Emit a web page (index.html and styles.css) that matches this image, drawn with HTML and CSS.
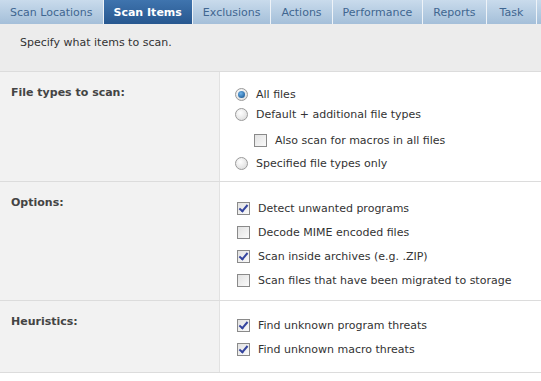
FILE: index.html
```html
<!DOCTYPE html>
<html lang="en">
<head>
    <meta charset="UTF-8">
    <title>Scan Items</title>
    <link rel="stylesheet" href="styles.css">
</head>
<body>
    <!-- Tab strip -->
    <div class="tabs">
        <div class="tab">Scan Locations</div>
        <div class="tab active">Scan Items</div>
        <div class="tab">Exclusions</div>
        <div class="tab">Actions</div>
        <div class="tab">Performance</div>
        <div class="tab">Reports</div>
        <div class="tab wide">Task</div>
        <div class="tab rest"></div>
    </div>

    <div class="intro">Specify what items to scan.</div>

    <div class="section">
        <div class="label">File types to scan:</div>
        <div class="fields">
            <div class="option"><span class="radio on"></span>All files</div>
            <div class="option"><span class="radio"></span>Default + additional file types</div>
            <div class="option sub"><span class="check"></span>Also scan for macros in all files</div>
            <div class="option"><span class="radio"></span>Specified file types only</div>
        </div>
    </div>

    <div class="section">
        <div class="label">Options:</div>
        <div class="fields boxes">
            <div class="option"><span class="check on"></span>Detect unwanted programs</div>
            <div class="option"><span class="check"></span>Decode MIME encoded files</div>
            <div class="option"><span class="check on"></span>Scan inside archives (e.g. .ZIP)</div>
            <div class="option"><span class="check"></span>Scan files that have been migrated to storage</div>
        </div>
    </div>

    <div class="section">
        <div class="label">Heuristics:</div>
        <div class="fields boxes heur">
            <div class="option"><span class="check on"></span>Find unknown program threats</div>
            <div class="option"><span class="check on"></span>Find unknown macro threats</div>
        </div>
    </div>
</body>
</html>
```

FILE: styles.css
```css
body {
    margin: 0;
    background: #fff;
    font-family: "DejaVu Sans", Verdana, sans-serif;
    font-size: 11px;
    color: #333;
    overflow: hidden;
}

/* Tabs */
.tabs {
    display: flex;
    height: 24px;
    white-space: nowrap;
}

.tab {
    height: 24px;
    line-height: 25px;
    padding: 0 10px;
    color: #3f6690;
    background: linear-gradient(#c9dbec, #a4bfd9);
    border-right: 1px solid #eef3f8;
    flex-shrink: 0;
}

.tab.active {
    color: #fff;
    font-weight: bold;
    background: linear-gradient(#3f74ae, #27578f);
}

.tab.wide {
    padding: 0 13px;
}

.tab.rest {
    flex: 1;
    flex-shrink: 1;
    padding: 0;
    border-right: 0;
}

.intro {
    background: #ececec;
    height: 48px;
    box-sizing: border-box;
    padding: 12px 20px 0;
    border-bottom: 1px solid #dcdcdc;
}

/* Sections */
.section {
    display: flex;
    border-bottom: 1px solid #dcdcdc;
}

.label {
    width: 220px;
    flex-shrink: 0;
    background: #f2f2f2;
    border-right: 1px solid #e2e2e2;
    font-weight: bold;
    color: #444;
    padding: 14px 0 0 11px;
    box-sizing: border-box;
}

.fields {
    padding: 16px 0 11px 15px;
    display: flex;
    flex-direction: column;
    gap: 7px;
    flex: 1;
}

.fields.boxes {
    padding: 20px 0 13px 17px;
    gap: 11px;
}

.fields.heur {
    padding-top: 18px;
    padding-bottom: 16px;
}

.option {
    display: flex;
    align-items: center;
    height: 13px;
    line-height: 13px;
}

.option.sub {
    margin: 6px 0 3px 19px;
}

.radio {
    width: 11px;
    height: 11px;
    border-radius: 50%;
    border: 1px solid #9a9a9a;
    background: radial-gradient(circle at 40% 35%, #fff, #d6d6d6);
    margin-right: 8px;
    position: relative;
}

.radio.on::after {
    content: '';
    position: absolute;
    left: 2px;
    top: 2px;
    width: 7px;
    height: 7px;
    border-radius: 50%;
    background: radial-gradient(circle at 40% 35%, #6fb3ea, #0d4a86);
}

.check {
    width: 11px;
    height: 11px;
    border: 1px solid #8a8a8a;
    background: linear-gradient(135deg, #e2e2e2, #fafafa);
    margin-right: 8px;
    position: relative;
}

.check.on::after {
    content: '';
    position: absolute;
    left: 3px;
    top: 0px;
    width: 3px;
    height: 7px;
    border: solid #34449e;
    border-width: 0 2px 2px 0;
    transform: rotate(40deg);
}
```
